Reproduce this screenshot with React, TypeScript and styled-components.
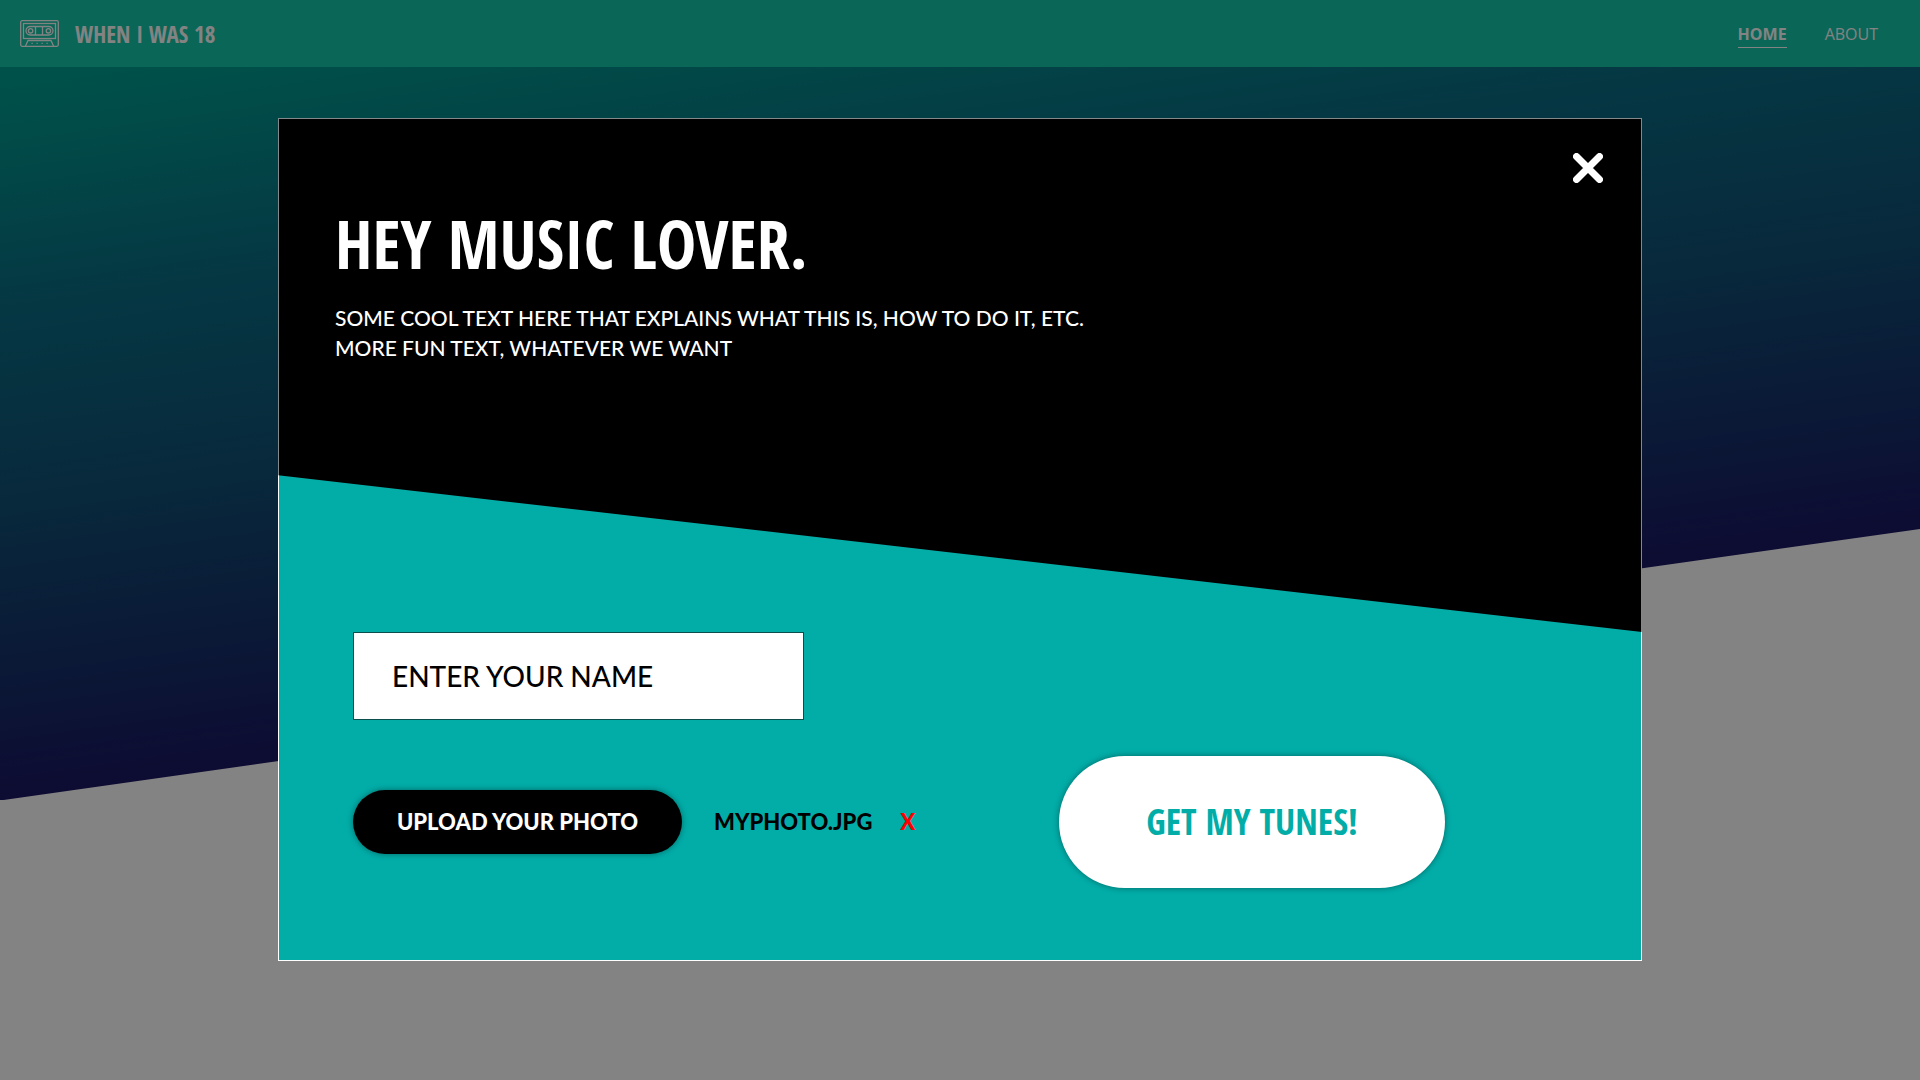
import React, { useState } from 'react';
import styled, { createGlobalStyle } from 'styled-components';

const condensed = '"Open Sans Condensed", "Roboto Condensed", sans-serif';
const geometric = 'Lato, "Open Sans", sans-serif';
const teal = '#02ada8';

const GlobalStyle = createGlobalStyle`
  *, *::before, *::after { box-sizing: border-box; }
  body { margin: 0; background: #fff; font-family: "Open Sans", sans-serif; }
  button, input { font: inherit; }
`;

const Page = styled.div`
  display: grid;
  min-height: 100vh;
  grid-template-rows: auto 1fr;
`;

const Header = styled.header`
  display: flex;
  align-items: center;
  justify-content: space-between;
  height: 67px;
  padding: 0 42px 0 20px;
  background: #14c6a7;
  color: #fff;
`;

const Brand = styled.a`
  display: flex;
  align-items: center;
  gap: 16px;
  color: inherit;
  text-decoration: none;
  font: 700 23px/32px ${condensed};
`;

const Nav = styled.nav`
  display: flex;
  gap: 38px;
`;

const NavLink = styled.a<{ $active?: boolean }>`
  padding: 3px 0 1px;
  border-bottom: 1px solid ${p => (p.$active ? '#fff' : 'transparent')};
  color: inherit;
  font-size: 16px;
  line-height: 24px;
  font-weight: ${p => (p.$active ? 700 : 400)};
  text-decoration: none;
`;

const Hero = styled.div`
  height: calc(68vh - 1px);
  background: linear-gradient(172deg, #009e90 2%, #0a6c83 24%, #105376 42%, #16306a 60%, #1c1260 76%);
  clip-path: polygon(0 0, 100% 0, 100% 63%, 0 100%);
`;

const Overlay = styled.div`
  position: fixed;
  inset: 0;
  display: grid;
  justify-items: center;
  align-items: start;
  padding: 118px 24px 24px;
  overflow: auto;
  background: rgba(0, 0, 0, 0.486);
`;

const Modal = styled.section`
  width: 73%;
  max-width: 1364px;
  border: 1px solid #fff;
  background: ${teal};
`;

const Intro = styled.div`
  display: flex;
  align-items: flex-start;
  justify-content: space-between;
  min-height: 514px;
  margin: -1px -1px 0;
  padding: 84px 38px 84px 56px;
  border: 1px solid #83898b;
  border-bottom: 0;
  background: #000;
  background-clip: padding-box;
  clip-path: polygon(0 0, 100% 0, 100% 100%, 0 69.5%);
  color: #fff;
`;

const Title = styled.h1`
  margin: 0 0 20px;
  font: 700 66px/80px ${condensed};
`;

const Lead = styled.p`
  margin: 0;
  font: 500 21px/30px ${geometric};
`;

const CloseButton = styled.button`
  display: grid;
  margin-top: -50px;
  padding: 0;
  border: 0;
  background: none;
  color: #fff;
  cursor: pointer;
`;

const Form = styled.form`
  padding: 0 196px 72px 74px;
`;

const NameInput = styled.input`
  display: block;
  width: 451px;
  max-width: 100%;
  height: 88px;
  padding: 0 38px;
  border: 1px solid #0b4f4c;
  border-radius: 0;
  background: #fff;
  color: #000;
  font: 500 28px/40px ${geometric};
  &::placeholder { color: #000; opacity: 1; }
`;

const Actions = styled.div`
  display: flex;
  flex-wrap: wrap;
  align-items: center;
  margin-top: 36px;
`;

const Pill = styled.button<{ $large?: boolean }>`
  width: ${p => (p.$large ? 386 : 329)}px;
  height: ${p => (p.$large ? 132 : 64)}px;
  margin-left: ${p => (p.$large ? 'auto' : '0')};
  padding: 0;
  border: 0;
  border-radius: 66px;
  background: ${p => (p.$large ? '#fff' : '#000')};
  color: ${p => (p.$large ? teal : '#fff')};
  font: ${p => (p.$large ? `700 36px/48px ${condensed}` : `900 22px/32px ${geometric}`)};
  box-shadow: 0 0 6px rgba(0, 0, 0, 0.4);
  cursor: pointer;
`;

const FileName = styled.span`
  margin-left: 32px;
  color: #000;
  font: 900 22px/32px ${geometric};
`;

const RemoveButton = styled.button`
  margin-left: 28px;
  padding: 0;
  border: 0;
  background: none;
  color: #f00;
  font: 900 22px/32px ${geometric};
  cursor: pointer;
`;

const Cassette = () => (
  <svg width="39" height="27" viewBox="0 0 39 27" fill="none" stroke="currentColor" strokeWidth="1.3" aria-hidden="true">
    <rect x="0.7" y="0.7" width="37.6" height="25.6" rx="1.5" />
    <rect x="3.5" y="3.5" width="32" height="15" />
    <rect x="6" y="6.5" width="27" height="8.5" rx="4.2" />
    <circle cx="10.6" cy="10.8" r="2.2" />
    <circle cx="28.4" cy="10.8" r="2.2" />
    <path d="M15.5 6.5v8.5M22.5 6.5v8.5" />
    <path d="M5.5 26 L8 20.5 H31 L33.5 26" />
    <path d="M11.5 23.4h1.2M16.5 23.4h1.2M21.5 23.4h1.2M26.5 23.4h1.2" />
  </svg>
);

const Cross = () => (
  <svg width="30" height="30" viewBox="0 0 30 30" stroke="currentColor" strokeWidth="7" strokeLinecap="round" aria-hidden="true">
    <path d="M3.5 3.5 26.5 26.5M26.5 3.5 3.5 26.5" />
  </svg>
);

export default function App() {
  const [name, setName] = useState('');

  return (
    <>
      <GlobalStyle />
      <Page>
        <Header>
          <Brand href="#home">
            <Cassette />
            WHEN I WAS 18
          </Brand>
          <Nav>
            <NavLink href="#home" $active>HOME</NavLink>
            <NavLink href="#about">ABOUT</NavLink>
          </Nav>
        </Header>
        <Hero />
      </Page>
      <Overlay>
        <Modal role="dialog" aria-modal="true" aria-labelledby="dialog-title">
          <Intro>
            <div>
              <Title id="dialog-title">HEY MUSIC LOVER.</Title>
              <Lead>
                SOME COOL TEXT HERE THAT EXPLAINS WHAT THIS IS, HOW TO DO IT, ETC.
                <br />
                MORE FUN TEXT, WHATEVER WE WANT
              </Lead>
            </div>
            <CloseButton type="button" aria-label="Close"><Cross /></CloseButton>
          </Intro>
          <Form onSubmit={e => e.preventDefault()}>
            <NameInput
              aria-label="Enter your name"
              placeholder="ENTER YOUR NAME"
              value={name}
              onChange={e => setName(e.target.value)}
            />
            <Actions>
              <Pill type="button">UPLOAD YOUR PHOTO</Pill>
              <FileName>MYPHOTO.JPG</FileName>
              <RemoveButton type="button" aria-label="Remove photo">X</RemoveButton>
              <Pill type="submit" $large>GET MY TUNES!</Pill>
            </Actions>
          </Form>
        </Modal>
      </Overlay>
    </>
  );
}
